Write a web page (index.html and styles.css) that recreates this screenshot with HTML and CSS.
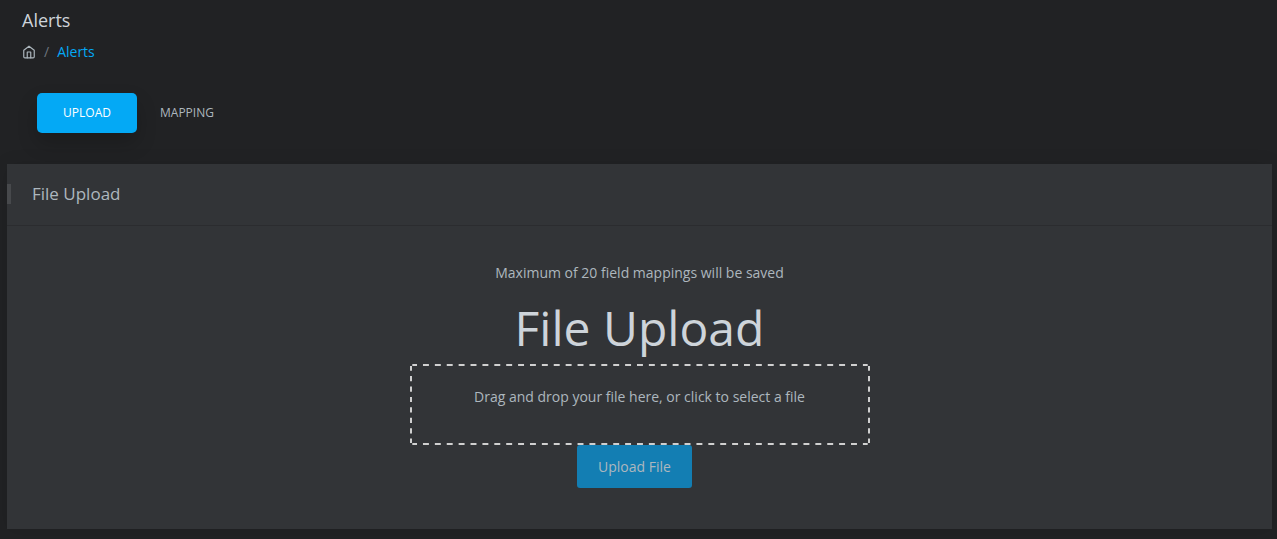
FILE: index.html
```html
<!DOCTYPE html>
<html lang="en">
<head>
<meta charset="utf-8">
<title>Alerts</title>
<link rel="stylesheet" href="styles.css">
</head>
<body>
<header class="page-header">
  <h5 class="page-title">Alerts</h5>
  <nav class="breadcrumb">
    <svg class="home" viewBox="0 0 24 24"><path d="M3 9l9-7 9 7v11a2 2 0 0 1-2 2H5a2 2 0 0 1-2-2z"/><path d="M9 22V12h6v10"/></svg>
    <span class="slash">/</span><a class="crumb">Alerts</a>
  </nav>
</header>
<ul class="tabs"><li class="tab active">UPLOAD</li><li class="tab">MAPPING</li></ul>
<section class="card">
  <div class="card-header"><h5 class="card-title">File Upload</h5></div>
  <div class="card-body">
    <p class="note">Maximum of 20 field mappings will be saved</p>
    <h1 class="heading">File Upload</h1>
    <div class="dropzone">
      <svg class="outline" viewBox="0 0 460 81">
        <path class="dash-x" d="M2.3 1H457.7M2.3 80H457.7"/>
        <path class="dash-y" d="M1 2V79M459 2V79"/>
      </svg>
      Drag and drop your file here, or click to select a file
    </div>
    <button class="upload">Upload File</button>
  </div>
</section>
</body>
</html>
```
FILE: styles.css
```css
* { box-sizing: border-box; }
body { margin: 0; height: 539px; overflow: hidden; background: #212224; color: #adb7be; font: 14px/21px "Open Sans", sans-serif; }
h1, h5, p, ul { margin: 0; padding: 0; font-weight: 400; }
.page-header { height: 78px; padding: 8px 22px 0; }
.page-title { font-size: 18px; line-height: 25px; color: #ced4da; }
.breadcrumb { display: flex; align-items: center; margin-top: 8px; }
.home { width: 14px; height: 14px; fill: none; stroke: #adb7be; stroke-width: 2; stroke-linecap: round; stroke-linejoin: round; }
.slash { margin: 0 8px; color: #6c757d; }
.crumb { color: #04a9f5; }
.tabs { display: flex; list-style: none; height: 71px; margin: 0 7px 15px; padding: 15px 30px; font-size: 12px; }
.tab { height: 40px; line-height: 40px; padding: 0 23px; }
.active { width: 100px; padding: 0; text-align: center; color: #fff; background: #04a9f5; border-radius: 5px; box-shadow: 0 10px 20px rgba(0,0,0,.2); }
.card { height: 365px; margin: 0 5px 0 7px; background: #323437; box-shadow: 0 2px 18px rgba(0,0,0,.1); }
.card-header { height: 62px; padding: 20px 0; border-bottom: 1px solid #2b2c2f; }
.card-title { height: 20px; padding-left: 21px; border-left: 4px solid #47494c; font-size: 17px; line-height: 20px; }
.card-body { display: flex; flex-direction: column; align-items: center; padding-top: 36px; }
.heading { font-size: 48px; line-height: 58px; margin-top: 16px; color: #ced4da; }
.dropzone { position: relative; width: 460px; height: 81px; margin: 7px 0 0 1px; padding: 22px 1px 0 0; text-align: center; }
.outline { position: absolute; inset: 0; width: 460px; height: 81px; fill: none; stroke: #d0d0d0; stroke-width: 2; }
.dash-x { stroke-dasharray: 5.945 5.945; stroke-dashoffset: 1.22; }
.dash-y { stroke-dasharray: 5.2 5.23; stroke-dashoffset: .4; }
.upload { width: 115px; height: 43px; margin-left: -10px; border: 0; border-radius: 3px; background: #137eb3; color: #adb7be; font: inherit; }
```
